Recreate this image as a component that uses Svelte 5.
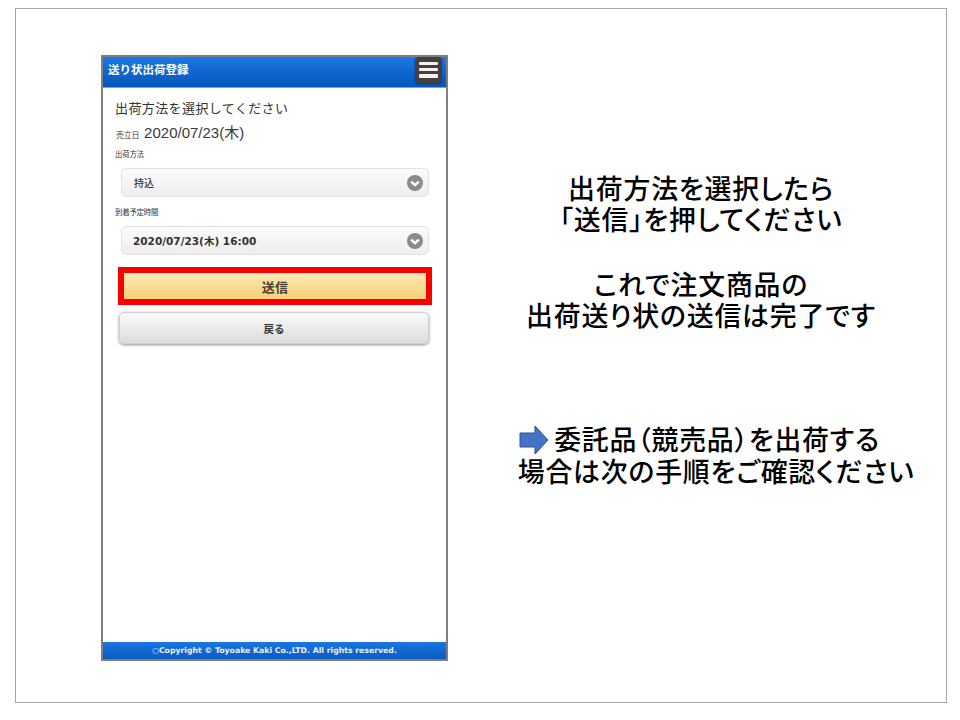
<script>
  const groups = [
    ['出荷方法を選択したら', '「送信」を押してください'],
    ['これで注文商品の', '出荷送り状の送信は完了です']
  ];
</script>

<div class="slide">
  <section class="phone">
    <header class="bar">
      <span class="title">送り状出荷登録</span>
      <span class="menu" aria-label="メニュー"><i></i><i></i><i></i></span>
    </header>
    <main class="body">
      <h1>出荷方法を選択してください</h1>
      <div class="date"><small>売立日</small> <span>2020/07/23(木)</span></div>
      <div class="label first">出荷方法</div>
      <div class="select">
        <span class="sel-text jp">持込</span>
        <svg class="chev" viewBox="0 0 16 16" width="16" height="16">
          <circle cx="8" cy="8" r="8" fill="#8b8b8b" />
          <path d="M4.2 6.6 8 10.2l3.8-3.6" fill="none" stroke="#fff" stroke-width="2.4" />
        </svg>
      </div>
      <div class="label second">到着予定時間</div>
      <div class="select">
        <span class="sel-text">2020/07/23(木) 16:00</span>
        <svg class="chev" viewBox="0 0 16 16" width="16" height="16">
          <circle cx="8" cy="8" r="8" fill="#8b8b8b" />
          <path d="M4.2 6.6 8 10.2l3.8-3.6" fill="none" stroke="#fff" stroke-width="2.4" />
        </svg>
      </div>
      <div class="send"><span>送信</span></div>
      <div class="back">戻る</div>
    </main>
    <footer class="foot">○Copyright © Toyoake Kaki Co.,LTD. All rights reserved.</footer>
  </section>

  <aside class="notes">
    {#each groups as g}
      <p class="group">{g[0]}<br />{g[1]}</p>
    {/each}
    <p class="group last">
      <span class="lead"><svg class="arrow" viewBox="0 0 30 30" width="30" height="30">
        <path d="M1 8h15V1l13 14-13 14v-7H1z" fill="#4472c4" stroke="#2f528f" stroke-width="1" />
      </svg>委託品（競売品）を出荷する</span><br />場合は次の手順をご確認ください
    </p>
  </aside>
</div>

<style>
  :global(body) {
    margin: 0;
    background: #fff;
  }
  .slide {
    box-sizing: border-box;
    width: 932px;
    height: 695px;
    margin: 8px 0 0 15px;
    border: 1px solid #a6a6a6;
    padding: 46px 0 0 85px;
    display: flex;
    font-family: "Noto Sans CJK JP", "Noto Sans", sans-serif;
    color: #000;
  }
  .phone {
    box-sizing: border-box;
    width: 347px;
    height: 606px;
    flex: none;
    border: 2px solid #7f7f7f;
    display: flex;
    flex-direction: column;
    background: #fff;
  }
  .bar {
    height: 31px;
    flex: none;
    background: linear-gradient(#1b78e6, #0556b8);
    display: flex;
    align-items: center;
    justify-content: space-between;
    padding: 0 4px 0 5px;
    border-bottom: 1px solid #6aa5e8;
    box-sizing: border-box;
  }
  .title {
    color: #fff;
    font-size: 11.500px;
    font-weight: 700;
    margin-top: -6px;
  }
  .menu {
    box-sizing: border-box;
    width: 27px;
    height: 26px;
    margin-top: -5px;
    background: #453f3f;
    border-radius: 4px;
    padding: 5px 4px;
    display: flex;
    flex-direction: column;
    justify-content: space-between;
    box-shadow: 0 1px 2px rgba(0, 0, 0, 0.4);
  }
  .menu i {
    display: block;
    height: 3.500px;
    background: #f1f1f1;
    border-radius: 1px;
  }
  .body {
    flex: 1;
    padding: 0 15px 0 12px;
  }
  h1 {
    margin: 11px 0 0 0;
    font-size: 13px;
    line-height: 18px;
    font-weight: 400;
    color: #333;
    letter-spacing: 0.4px;
  }
  .date {
    margin: 7px 0 0 1px;
    display: flex;
    align-items: baseline;
    gap: 5px;
    color: #333;
    line-height: 18px;
    height: 18px;
  }
  .date small {
    font-size: 8px;
    letter-spacing: -0.3px;
  }
  .date span {
    font-family: "Liberation Sans", "Noto Sans CJK JP", sans-serif;
    font-size: 15px;
    color: #3a3a3a;
  }
  .label {
    font-size: 7.500px;
    line-height: 10px;
    color: #333;
    letter-spacing: -0.3px;
  }
  .label.first {
    margin-top: 7px;
    margin-bottom: 9px;
  }
  .label.second {
    margin-top: 10px;
    margin-bottom: 9px;
  }
  .select {
    box-sizing: border-box;
    margin-left: 6px;
    width: 308px;
    height: 29px;
    border: 1px solid #e2e2e2;
    border-radius: 5px;
    background: linear-gradient(#fbfbfb, #eeeeee);
    display: flex;
    align-items: center;
    justify-content: space-between;
    padding: 0 5px 0 11px;
    color: #333;
  }
  .sel-text {
    font-family: "DejaVu Sans", "Noto Sans CJK JP", sans-serif;
    font-size: 10.500px;
    font-weight: 700;
  }
  .sel-text.jp {
    font-family: "Noto Sans CJK JP", sans-serif;
    font-size: 10px;
    font-weight: 500;
    margin-left: 1px;
  }
  .chev {
    flex: none;
  }
  .send {
    box-sizing: border-box;
    margin: 12px 0 0 3px;
    width: 314px;
    height: 38px;
    border: 6px solid #f60000;
    background: linear-gradient(#fdeab8, #f8cf74);
    display: flex;
    align-items: center;
    justify-content: center;
    font-size: 13px;
    font-weight: 700;
    color: #4a4030;
    letter-spacing: 0.3px;
  }
  .back {
    box-sizing: border-box;
    margin: 7px 0 0 4px;
    width: 310px;
    height: 32px;
    border: 1px solid #cfcfcf;
    border-radius: 5px;
    background: linear-gradient(#fafafa, #dcdcdc);
    box-shadow: 0 1px 3px rgba(0, 0, 0, 0.45);
    display: flex;
    align-items: center;
    justify-content: center;
    font-size: 10.500px;
    font-weight: 700;
    color: #333;
  }
  .foot {
    height: 17px;
    flex: none;
    background: linear-gradient(#1a76e4, #0a5cc0);
    color: #e8f0fb;
    font-family: "DejaVu Sans", "Noto Sans CJK JP", sans-serif;
    font-size: 7.750px;
    font-weight: 700;
    line-height: 17px;
    text-align: center;
    white-space: nowrap;
  }
  .notes {
    width: 440px;
    margin-left: 33px;
    padding-top: 117px;
    text-align: center;
    font-size: 26.900px;
    line-height: 31px;
    font-weight: 500;
    font-feature-settings: "palt";
    letter-spacing: 0.8px;
  }
  .group {
    margin: 0 0 34px;
    white-space: nowrap;
  }
  .group.last {
    margin-top: 93px;
    margin-left: 30px;
  }
  .lead {
    margin-right: 33px;
  }
  .arrow {
    vertical-align: -5px;
    margin-right: 5px;
  }
</style>
